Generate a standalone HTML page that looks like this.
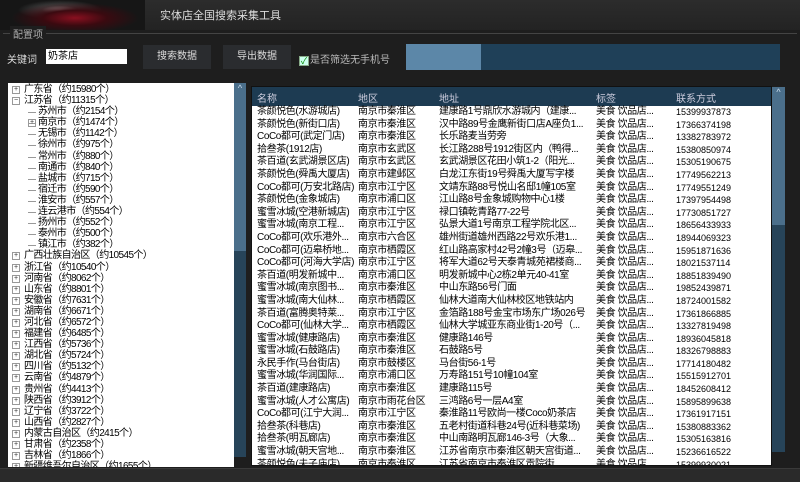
<!DOCTYPE html>
<html><head><meta charset="utf-8"><style>
*{margin:0;padding:0;box-sizing:border-box}
body{width:800px;height:482px;background:#1e1e1e;font-family:"Liberation Sans","Noto Sans CJK SC",sans-serif;overflow:hidden;position:relative;color:#000}
.title{position:absolute;left:0;top:0;width:800px;height:30px;background:linear-gradient(#2c2c2c,#232323)}
.art{position:absolute;left:0;top:0;width:145px;height:30px;background:radial-gradient(ellipse at 75px 18px,#8a1020 0,#3a0a10 30%,transparent 60%),radial-gradient(ellipse at 60px 10px,#ccc 0,#444 15%,transparent 35%),#161616}
.ttxt{position:absolute;left:160px;top:7px;color:#ddd;font-size:11px}
.grp{position:absolute;left:3px;top:33px;width:794px;height:42px;border-top:1px solid #444}
.grpl{position:absolute;left:10px;top:26px;color:#aaa;font-size:10px;background:#1e1e1e;padding:0 3px}
.lbl{position:absolute;left:7px;top:51px;color:#ddd;font-size:10px}
.inp{position:absolute;left:46px;top:49px;width:81px;height:15px;background:#fff;font-size:10px;padding-left:2px;line-height:15px}
.btn{position:absolute;top:45px;height:24px;width:68px;background:#2a2c2f;color:#ddd;font-size:10px;text-align:center;line-height:24px}
.chk{position:absolute;left:299px;top:51px;color:#bbb;font-size:10px}
.chk span{display:inline-block;width:10px;height:10px;border:1px solid #8a8;background:#cfe;vertical-align:-1px;margin-right:1px;font-size:9px;line-height:8px;color:#080;text-align:center}
.prog{position:absolute;left:406px;top:44px;width:374px;height:26px;background:#1f4058}
.prog i{position:absolute;left:0;top:0;width:75px;height:26px;background:#5c87a8}
.tree{position:absolute;left:8px;top:83px;width:226px;height:384px;background:#fff;font-size:10px;letter-spacing:-0.6px;line-height:11.1px;overflow:hidden;padding-top:1px}
.tree div{white-space:nowrap;height:11.1px;position:relative}
.pb{position:absolute;left:4px;top:2px;width:8px;height:8px;border:1px solid #999;font-size:7px;line-height:6px;text-align:center;color:#333;letter-spacing:0}
.tree div.p{padding-left:16px}
.tree div.c{padding-left:30px}
.tree div.c:before{content:"";position:absolute;left:20px;top:6px;width:8px;border-top:1px solid #999}
.tree div.c .pb{left:20px}
.sb{position:absolute;background:#274459}
.th{position:absolute;background:#4b6f8b}
.tbl{position:absolute;left:251px;top:86px;width:521px;height:380px;background:#fff;border:1px solid #111;overflow:hidden}
.hdr{height:19px;background:#1d3b52;color:#ccd;font-size:10px;position:relative}
.hdr span,.row span{position:absolute;white-space:nowrap}
.row{position:relative;height:12.6px;font-size:10px;letter-spacing:-0.4px;line-height:12.6px}
.bot{position:absolute;left:0;top:468px;width:800px;height:14px;background:#2a2a2a;border-top:1px solid #3a3a3a}
</style></head><body>
<div class="title"><div class="art"></div><div class="ttxt">实体店全国搜索采集工具</div></div>
<div class="grp"></div><div class="grpl">配置项</div>
<div class="lbl">关键词</div><div class="inp">奶茶店</div>
<div class="btn" style="left:143px">搜索数据</div>
<div class="btn" style="left:223px">导出数据</div>
<div class="chk"><span>✓</span>是否筛选无手机号</div>
<div class="prog"><i></i></div>
<div class="tree">
<div class="p"><span class="pb">+</span>广东省（约15980个）</div>
<div class="p"><span class="pb">−</span>江苏省（约11315个）</div>
<div class="c">苏州市（约2154个）</div>
<div class="c"><span class="pb">+</span>南京市（约1474个）</div>
<div class="c">无锡市（约1142个）</div>
<div class="c">徐州市（约975个）</div>
<div class="c">常州市（约880个）</div>
<div class="c">南通市（约840个）</div>
<div class="c">盐城市（约715个）</div>
<div class="c">宿迁市（约590个）</div>
<div class="c">淮安市（约557个）</div>
<div class="c">连云港市（约554个）</div>
<div class="c">扬州市（约552个）</div>
<div class="c">泰州市（约500个）</div>
<div class="c">镇江市（约382个）</div>
<div class="p"><span class="pb">+</span>广西壮族自治区（约10545个）</div>
<div class="p"><span class="pb">+</span>浙江省（约10540个）</div>
<div class="p"><span class="pb">+</span>河南省（约8062个）</div>
<div class="p"><span class="pb">+</span>山东省（约8801个）</div>
<div class="p"><span class="pb">+</span>安徽省（约7631个）</div>
<div class="p"><span class="pb">+</span>湖南省（约6671个）</div>
<div class="p"><span class="pb">+</span>河北省（约6572个）</div>
<div class="p"><span class="pb">+</span>福建省（约6485个）</div>
<div class="p"><span class="pb">+</span>江西省（约5736个）</div>
<div class="p"><span class="pb">+</span>湖北省（约5724个）</div>
<div class="p"><span class="pb">+</span>四川省（约5132个）</div>
<div class="p"><span class="pb">+</span>云南省（约4879个）</div>
<div class="p"><span class="pb">+</span>贵州省（约4413个）</div>
<div class="p"><span class="pb">+</span>陕西省（约3912个）</div>
<div class="p"><span class="pb">+</span>辽宁省（约3722个）</div>
<div class="p"><span class="pb">+</span>山西省（约2827个）</div>
<div class="p"><span class="pb">+</span>内蒙古自治区（约2415个）</div>
<div class="p"><span class="pb">+</span>甘肃省（约2358个）</div>
<div class="p"><span class="pb">+</span>吉林省（约1866个）</div>
<div class="p"><span class="pb">+</span>新疆维吾尔自治区（约1655个）</div>
</div>
<div class="sb" style="left:234px;top:83px;width:12px;height:374px"></div>
<div class="th" style="left:234px;top:83px;width:12px;height:168px;color:#cde;font-size:9px;text-align:center">^</div>
<div class="tbl">
<div class="hdr"><span style="left:5px;top:3px">名称</span><span style="left:106px;top:3px">地区</span><span style="left:187px;top:3px">地址</span><span style="left:344px;top:3px">标签</span><span style="left:424px;top:3px">联系方式</span></div>
<div id="rows"></div>
</div>
<div class="sb" style="left:772px;top:87px;width:13px;height:365px"></div>
<div class="th" style="left:772px;top:87px;width:13px;height:138px;color:#cde;font-size:9px;text-align:center">^</div>
<div class="bot"></div>
<script>
var d=[["茶颜悦色(水游城店)","南京市秦淮区","建康路1号鼎欣水游城内（建康...","15399937873"],
["茶颜悦色(新街口店)","南京市秦淮区","汉中路89号金鹰新街口店A座负1...","17366374198"],
["CoCo都可(武定门店)","南京市秦淮区","长乐路麦当劳旁","13382783972"],
["拾叁茶(1912店)","南京市玄武区","长江路288号1912街区内（鸭得...","15380850974"],
["茶百道(玄武湖景区店)","南京市玄武区","玄武湖景区花田小筑1-2（阳光...","15305190675"],
["茶颜悦色(舜禹大厦店)","南京市建邺区","白龙江东街19号舜禹大厦写字楼","17749562213"],
["CoCo都可(万安北路店)","南京市江宁区","文靖东路88号悦山名邸1幢105室","17749551249"],
["茶颜悦色(金象城店)","南京市浦口区","江山路8号金象城购物中心1楼","17397954498"],
["蜜雪冰城(空港新城店)","南京市江宁区","禄口镇乾青路77-22号","17730851727"],
["蜜雪冰城(南京工程...","南京市江宁区","弘景大道1号南京工程学院北区...","18656433933"],
["CoCo都可(欢乐港外...","南京市六合区","雄州街道雄州西路22号欢乐港1...","18944069323"],
["CoCo都可(迈皋桥地...","南京市栖霞区","红山路高家村42号2幢3号（迈皋...","15951871636"],
["CoCo都可(河海大学店)","南京市江宁区","将军大道62号天泰青城苑裙楼商...","18021537114"],
["茶百道(明发新城中...","南京市浦口区","明发新城中心2栋2单元40-41室","18851839490"],
["蜜雪冰城(南京图书...","南京市秦淮区","中山东路56号门面","19852439871"],
["蜜雪冰城(南大仙林...","南京市栖霞区","仙林大道南大仙林校区地铁站内","18724001582"],
["茶百道(富腾奥特莱...","南京市江宁区","金箔路188号金宝市场东广场026号","17361866885"],
["CoCo都可(仙林大学...","南京市栖霞区","仙林大学城亚东商业街1-20号（...","13327819498"],
["蜜雪冰城(健康路店)","南京市秦淮区","健康路146号","18936045818"],
["蜜雪冰城(石鼓路店)","南京市秦淮区","石鼓路5号","18326798883"],
["永民手作(马台街店)","南京市鼓楼区","马台街56-1号","17714180482"],
["蜜雪冰城(华润国际...","南京市浦口区","万寿路151号10幢104室","15515912701"],
["茶百道(建康路店)","南京市秦淮区","建康路115号","18452608412"],
["蜜雪冰城(人才公寓店)","南京市雨花台区","三鸿路6号一层A4室","15895899638"],
["CoCo都可(江宁大润...","南京市江宁区","秦淮路11号欧尚一楼Coco奶茶店","17361917151"],
["拾叁茶(科巷店)","南京市秦淮区","五老村街道科巷24号(近科巷菜场)","15380883362"],
["拾叁茶(明瓦廊店)","南京市秦淮区","中山南路明瓦廊146-3号（大象...","15305163816"],
["蜜雪冰城(朝天宫地...","南京市秦淮区","江苏省南京市秦淮区朝天宫街道...","15236616522"],
["茶颜悦色(夫子庙店)","南京市秦淮区","江苏省南京市秦淮区贡院街...","15399930021"]];
var h="";d.forEach(function(r){h+='<div class="row"><span style="left:5px">'+r[0]+'</span><span style="left:106px">'+r[1]+'</span><span style="left:187px">'+r[2]+'</span><span style="left:344px">美食 饮品店...</span><span style="left:424px;font-size:9px;letter-spacing:0">'+r[3]+'</span></div>'});
document.getElementById("rows").innerHTML=h;
</script>
</body></html>
